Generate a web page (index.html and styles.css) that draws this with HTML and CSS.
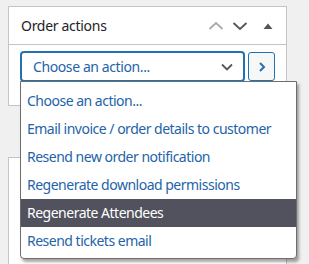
FILE: index.html
```html
<!DOCTYPE html>
<html>
<head>
<meta charset="utf-8">
<link rel="stylesheet" href="styles.css">
</head>
<body>
<div class="column">
  <div class="postbox">
    <div class="postbox-header">
      <h2 class="title">Order actions</h2>
      <div class="handles">
        <svg class="h-up" width="18" height="16" viewBox="0 0 18 16"><path d="M2.5 11 L9 5 L15.5 11" fill="none" stroke="currentColor" stroke-width="1.8"/></svg>
        <svg class="h-down" width="18" height="16" viewBox="0 0 18 16"><path d="M2.5 5 L9 11 L15.5 5" fill="none" stroke="currentColor" stroke-width="1.8"/></svg>
        <svg class="h-toggle" width="12" height="12" viewBox="0 0 12 12"><path d="M1.5 9 L6 3.5 L10.5 9 Z" fill="currentColor"/></svg>
      </div>
    </div>
    <div class="inside">
      <div class="select">
        <span>Choose an action...</span>
        <svg width="14" height="14" viewBox="0 0 14 14"><path d="M2 4.5 L7 9.5 L12 4.5" fill="none" stroke="currentColor" stroke-width="1.8"/></svg>
      </div>
      <div class="go">
        <svg width="10" height="12" viewBox="0 0 10 12"><path d="M3 2 L7 6 L3 10" fill="none" stroke="currentColor" stroke-width="2"/></svg>
      </div>
    </div>
  </div>
  <div class="postbox second"></div>
</div>
<ul class="dropdown">
  <li>Choose an action...</li>
  <li>Email invoice / order details to customer</li>
  <li>Resend new order notification</li>
  <li>Regenerate download permissions</li>
  <li class="active">Regenerate Attendees</li>
  <li>Resend tickets email</li>
</ul>
</body>
</html>
```
FILE: styles.css
```css
html, body {
  margin: 0;
  padding: 0;
  background: #f0f0f1;
  height: 264px;
  overflow: hidden;
  font-family: "Noto Sans", "Open Sans", sans-serif;
}
.column {
  padding: 6px 0 0 8px;
  width: 279px;
}
.postbox {
  background: #fff;
  border: 1px solid #c3c4c7;
  box-sizing: border-box;
  width: 279px;
}
.postbox.second {
  margin-top: 51px;
  height: 120px;
}
.postbox-header {
  height: 37px;
  border-bottom: 1px solid #c3c4c7;
  display: flex;
  align-items: center;
  justify-content: space-between;
  padding-left: 12px;
}
.title {
  margin: 0;
  font-size: 14px;
  font-weight: 400;
  color: #1d2327;
  letter-spacing: -0.3px;
}
.handles {
  display: flex;
  align-items: center;
  gap: 6px;
  padding-right: 12px;
}
.h-up { color: #a7aaad; }
.h-down { color: #50575e; margin-right: 7px; }
.h-toggle { color: #50575e; }
.inside {
  display: flex;
  align-items: center;
  gap: 3px;
  padding: 6px 11px 23px 11px;
}
.select {
  width: 226px;
  height: 31px;
  box-sizing: border-box;
  border: 2px solid #2271b1;
  border-radius: 4px;
  display: flex;
  align-items: center;
  justify-content: space-between;
  padding: 0 9px 0 11px;
  font-size: 14px;
  color: #2463a8;
  letter-spacing: -0.4px;
}
.select svg { color: #50575e; }
.go {
  width: 27px;
  height: 29px;
  box-sizing: border-box;
  border: 1px solid #2271b1;
  border-radius: 3px;
  background: #f6f7f7;
  color: #2271b1;
  display: flex;
  align-items: center;
  justify-content: center;
}
.dropdown {
  position: absolute;
  left: 20px;
  top: 81px;
  width: 277px;
  box-sizing: border-box;
  margin: 0;
  padding: 5px 0 3px;
  list-style: none;
  background: #fff;
  border: 1px solid #6e6e6e;
  border-radius: 0 0 4px 4px;
  box-shadow: 2px 3px 3px rgba(0,0,0,0.35);
}
.dropdown li {
  height: 28px;
  line-height: 28px;
  padding-left: 6px;
  font-size: 14px;
  color: #2463a8;
  letter-spacing: -0.5px;
  white-space: nowrap;
}
.dropdown li.active {
  background: #52525e;
  color: #fff;
}
```
